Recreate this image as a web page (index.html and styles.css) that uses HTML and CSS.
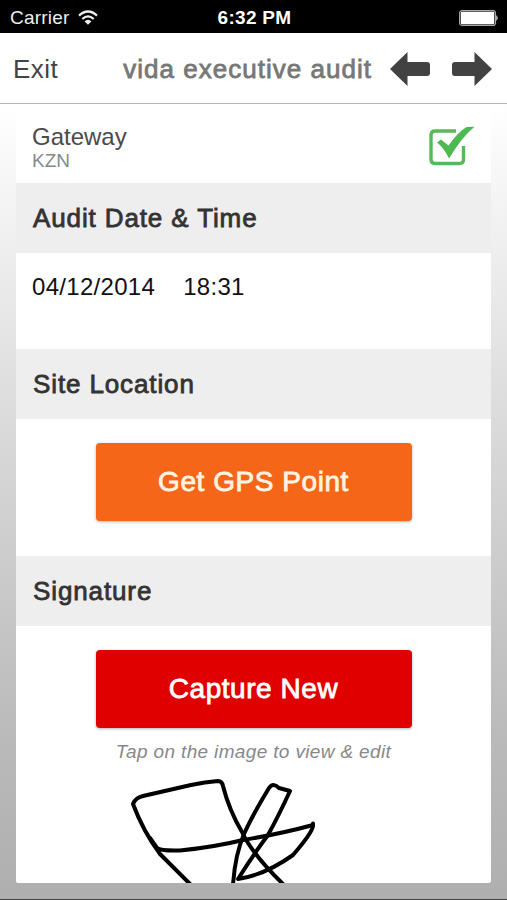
FILE: index.html
```html
<!DOCTYPE html>
<html lang="en">
<head>
<meta charset="utf-8">
<title>vida executive audit</title>
<link rel="stylesheet" href="styles.css">
</head>
<body>
<div class="status">
  <div class="carrier"><span>Carrier</span>
    <svg width="20" height="16" viewBox="0 0 20 16" fill="none" stroke="#eee" stroke-width="2.2"><path d="M1 5.6Q10-2.6 19 5.6"/><path d="M4.3 9Q10 3.8 15.7 9"/><path d="M10 14.8L6.6 11.4Q10 8.3 13.4 11.4Z" fill="#eee" stroke="none"/></svg>
  </div>
  <div class="clock">6:32 PM</div>
  <svg class="battery" width="40" height="16" viewBox="0 0 40 16"><rect x=".6" y=".6" width="35.8" height="14.8" rx="2.5" fill="none" stroke="#aaa" stroke-width="1.2"/><rect x="1.8" y="1.8" width="33.4" height="12.4" rx="1.3" fill="#fff"/><path d="M37.3 5Q40 8 37.3 11Z" fill="#eee"/></svg>
</div>
<header class="nav">
  <span class="exit">Exit</span>
  <h1 class="title medium">vida executive audit</h1>
  <div class="arrows">
    <svg width="40" height="34" viewBox="0 0 40 34" fill="#424242"><path d="M0 17L17.5 0V10H37Q40 10 40 13V21Q40 24 37 24H17.5V34Z"/></svg>
    <svg width="40" height="34" viewBox="0 0 40 34" fill="#424242"><path d="M40 17L22.5 0V10H3Q0 10 0 13V21Q0 24 3 24H22.5V34Z"/></svg>
  </div>
</header>
<main class="page">
  <div class="card">
    <div class="site">
      <div>
        <div class="site-name">Gateway</div>
        <div class="site-region">KZN</div>
      </div>
      <svg width="46" height="40" viewBox="0 0 46 40"><path d="M27 5H6Q2 5 2 9V33.500Q2 37.500 6 37.500H30Q34.500 37.500 34.500 33.500V20" fill="none" stroke="#57b957" stroke-width="3.400"/><path d="M8 16.500L12 13.500L19.500 19.500Q29 6 37.500 1L45.500 .8Q33 11 20 32.500Q15 22 8 16.500Z" fill="#4eb950"/></svg>
    </div>
    <h2 class="head medium">Audit Date &amp; Time</h2>
    <div class="datetime"><span>04/12/2014</span><span>18:31</span></div>
    <h2 class="head medium">Site Location</h2>
    <div class="location"><button class="btn medium gps">Get GPS Point</button></div>
    <h2 class="head medium">Signature</h2>
    <div class="signature">
      <button class="btn medium capture">Capture New</button>
      <p class="hint">Tap on the image to view &amp; edit</p>
      <svg class="ink" width="230" height="115" viewBox="110 768 230 115" fill="none" stroke="#000" stroke-width="4" stroke-linecap="round" stroke-linejoin="round"><path d="M190 884L160 854Q143 831 133 804Q135 798 143 796L191 785Q205 782 218 781Q222 781 223 786Q229 810 242 832Q252 854 284 885"/><path d="M150 838L157 848Q160 851 180 850.500Q215 847 243 840Q280 834 313 825V823.500"/><path d="M313 826Q312 833 293 855Q265 875 238 879Q253 855 268 835Q279 815 290 791L279 788Q273 782 269 788Q252 816 244 834Q235 855 233 885"/></svg>
    </div>
  </div>
</main>
</body>
</html>
```
FILE: styles.css
```css
* { box-sizing: border-box; }
body {
  margin: 0;
  width: 507px;
  height: 900px;
  overflow: hidden;
  display: flex;
  flex-direction: column;
  background: #fff;
  color: #333;
  font-family: "Liberation Sans", Arial, sans-serif;
}
h1, h2, p { margin: 0; font-weight: 400; }
svg { display: block; flex: none; }
.medium { font-weight: 400; -webkit-text-stroke: .8px currentColor; }
.status {
  height: 33px;
  flex: none;
  padding: 3px 8px 0 10px;
  display: grid;
  grid-template-columns: 1fr auto 1fr;
  align-items: center;
  background: #000;
  color: #eee;
  font-size: 19px;
}
.carrier { display: flex; align-items: center; gap: 9px; letter-spacing: .2px; }
.clock { font-weight: 700; color: #fff; letter-spacing: .3px; }
.battery { justify-self: end; }
.nav {
  height: 71px;
  flex: none;
  padding: 2px 15px 0 13px;
  display: flex;
  align-items: center;
  border-bottom: 1px solid #b4b4b4;
  font-size: 26px;
}
.exit { color: #444; letter-spacing: .5px; }
.title { margin-left: auto; color: #777; font-size: 26px; letter-spacing: 1.02px; }
.exit, .title { padding-top: 1px; }
.arrows { display: flex; gap: 22px; margin-left: 18px; }
.page {
  flex: 1;
  min-height: 0;
  padding: 0 16px 17px;
  background: linear-gradient(#fff, #f4f4f4 12%, #d6d6d6 45%, #bababa 80%, #afafaf);
  border-bottom: 1px solid #444;
}
.card {
  height: 779px;
  overflow: hidden;
  background: #fff;
  border-radius: 0 0 2px 2px;
}
.site {
  height: 79px;
  padding: 19px 16px 0;
  display: flex;
  justify-content: space-between;
}
.site svg { margin-top: 3px; }
.site-name { font-size: 24px; line-height: 28px; color: #4a4a4a; }
.site-region { font-size: 19px; line-height: 20px; color: #888; }
.head {
  height: 70px;
  padding: 0 16px 0 17px;
  line-height: 71px;
  background: #eee;
  color: #333;
  font-size: 26px;
  letter-spacing: .88px;
}
.datetime {
  height: 96px;
  padding: 20px 16px;
  display: flex;
  gap: 28px;
  color: #111;
  font-size: 24px;
  line-height: 28px;
  letter-spacing: .3px;
}
.location { height: 137px; padding-top: 24px; }
.btn {
  display: block;
  width: 316px;
  height: 78px;
  margin: 0 auto;
  padding: 0;
  border: 0;
  border-radius: 4px;
  box-shadow: 0 1px 3px rgba(0, 0, 0, .3);
  font-family: inherit;
  font-size: 28px;
  letter-spacing: .55px;
}
.gps { background: #f66618; color: #fff3e2; }
.capture { background: #e10000; color: #fff; }
.signature { padding-top: 24px; }
.hint {
  padding-top: 12px;
  height: 40px;
  text-align: center;
  color: #888;
  font-size: 19px;
  line-height: 24px;
  font-style: italic;
  letter-spacing: .35px;
}
.ink { margin-left: 94px; }
```
